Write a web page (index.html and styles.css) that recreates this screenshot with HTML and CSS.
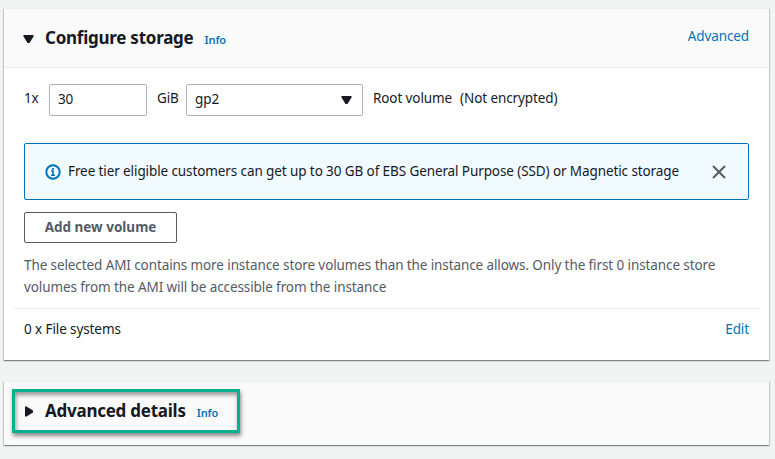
FILE: index.html
```html
<!DOCTYPE html>
<html lang="en">
<head>
<meta charset="utf-8">
<title>Configure storage</title>
<link rel="stylesheet" href="styles.css">
</head>
<body>
<section class="panel">
  <header class="panel-head">
    <svg class="caret" width="12" height="12" viewBox="0 0 12 12"><path d="M.5 2h10v1.500L6.500 10h-2L.5 3.500z" fill="#16191f"/></svg>
    <h2>Configure storage</h2>
    <a class="info">Info</a>
    <a class="link advanced">Advanced</a>
  </header>
  <div class="panel-body">
    <div class="volume">
      <span class="count">1x</span>
      <div class="field size">30</div>
      <span class="unit">GiB</span>
      <div class="field type">gp2<svg width="12" height="10" viewBox="0 0 12 10"><path d="M.5 1h10v1.500L6.500 9h-2L.5 2.500z" fill="#16191f"/></svg></div>
      <span class="root">Root volume</span>
      <span class="encryption">(Not encrypted)</span>
    </div>
    <div class="alert">
      <svg width="16" height="16" viewBox="0 0 16 16" fill="none" stroke="#0073bb" stroke-width="2"><circle cx="8" cy="8" r="6.700"/><path d="M8 11.500V7H6M8 4v2M6 11.300h4" stroke-width="1.600"/></svg>
      <span class="alert-text">Free tier eligible customers can get up to 30 GB of EBS General Purpose (SSD) or Magnetic storage</span>
      <svg class="close" width="14" height="14" viewBox="0 0 14 14" stroke="#545b64" stroke-width="2"><path d="M1 1l12 12M13 1L1 13"/></svg>
    </div>
    <button class="add">Add new volume</button>
    <p class="note">The selected AMI contains more instance store volumes than the instance allows. Only the first 0 instance store<br>volumes from the AMI will be accessible from the instance</p>
    <div class="files"><span>0 x File systems</span><a class="link">Edit</a></div>
  </div>
</section>
<section class="panel details">
  <div class="highlight">
    <svg class="caret" width="12" height="12" viewBox="0 0 12 12"><path d="M2 .5v10h1.500L10 6.500v-2L3.500.5z" fill="#16191f"/></svg>
    <h2>Advanced details</h2>
    <a class="info">Info</a>
  </div>
</section>
</body>
</html>
```
FILE: styles.css
```css
* { box-sizing: border-box; }
body { margin: 0; padding: 8px 6px 0 4px; height: 459px; overflow: hidden; background: #f2f3f3; color: #16191f; font: 13.5px/22px "Noto Sans", sans-serif; letter-spacing: -0.1px; }
.panel { height: 352px; background: #fff; box-shadow: 0 1px 1px rgba(0,28,36,.3), 1px 1px 1px rgba(0,28,36,.15), -1px 1px 1px rgba(0,28,36,.15); border-top: 1px solid #eaeded; }
.panel-head { height: 59px; padding: 0 20px 0 19px; display: flex; align-items: center; background: #fafafa; border-bottom: 1px solid #eaeded; }
.caret { margin-top: 1px; }
h2 { margin: -1px 0 0 10px; font-size: 17px; line-height: 22px; font-weight: 700; letter-spacing: -0.25px; white-space: nowrap; }
.info { margin: 3px 0 0 11px; color: #0073bb; font-size: 11px; font-weight: 600; line-height: 18px; letter-spacing: -0.1px; }
.link { color: #0073bb; }
.advanced { margin: -4px 0 0 auto; }
.panel-body { padding: 16px 20px 0; }
.volume { display: flex; height: 32px; align-items: center; white-space: pre; }
.count { width: 25px; }
.count, .unit, .root, .encryption { position: relative; top: -2px; }
.field { height: 32px; border: 1px solid #aab7b8; border-radius: 2px; padding: 2px 9px 4px 8px; display: flex; align-items: center; justify-content: space-between; background: #fff; }
.field svg { position: relative; top: 1px; }
.size { width: 98px; }
.unit { width: 39px; padding-left: 10px; }
.type { width: 177px; }
.root { margin: 0 8px 0 10px; }
.alert { height: 57px; margin-top: 27px; padding: 0 22px 0 20px; border: 1px solid #0073bb; border-radius: 2px; background: #f1faff; display: flex; align-items: center; }
.alert-text { margin: -2px 0 0 7px; white-space: nowrap; }
.close { margin-left: auto; }
.add { display: block; width: 153px; height: 31px; margin: 12px 0 0; padding: 0 0 2px; border: 1px solid #545b64; border-radius: 2px; background: #fff; color: #545b64; font: 700 13.5px/20px "Noto Sans", sans-serif; }
.note { margin: 11px 0 0; color: #545b64; white-space: nowrap; }
.files { height: 42px; margin: 10px -10px 0; padding: 0 10px 2px; border-top: 1px solid #eaeded; display: flex; align-items: center; justify-content: space-between; }
.details { height: 64px; margin-top: 21px; padding: 8px; background: #fafafa; }
.highlight { width: 228px; height: 44px; margin-top: -1px; border: 3px solid #08b08f; display: flex; align-items: center; padding: 1px 0 0 8px; box-shadow: 1px 3px 4px rgba(0,0,0,.45), inset 1px 3px 4px rgba(0,0,0,.4); }
```
